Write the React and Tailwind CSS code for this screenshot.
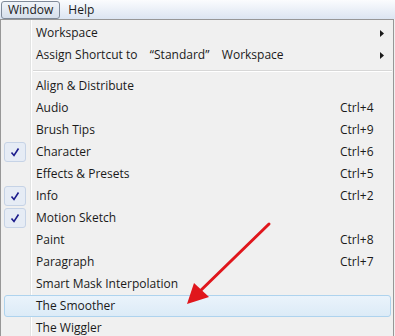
import React from 'react';

const items = [
  { label: 'Align & Distribute' },
  { label: 'Audio', key: 'Ctrl+4' },
  { label: 'Brush Tips', key: 'Ctrl+9' },
  { label: 'Character', key: 'Ctrl+6', checked: true },
  { label: 'Effects & Presets', key: 'Ctrl+5' },
  { label: 'Info', key: 'Ctrl+2', checked: true },
  { label: 'Motion Sketch', checked: true },
  { label: 'Paint', key: 'Ctrl+8' },
  { label: 'Paragraph', key: 'Ctrl+7' },
  { label: 'Smart Mask Interpolation' },
  { label: 'The Smoother', hover: true },
  { label: 'The Wiggler' },
];

function Check() {
  return (
    <div className="absolute left-[3px] top-[1px] w-[22px] h-[20px] rounded-[3px] border border-[#c6d3e6] bg-[#e6ecf5] flex items-center justify-center">
      <svg width="10" height="10" viewBox="0 0 10 10">
        <path d="M1.5 5.5 L4 8.5 L8.5 1.5" fill="none" stroke="#1c1c8c" strokeWidth="1.6" />
      </svg>
    </div>
  );
}

function Row({ label, shortcut, checked, hover, submenu }) {
  return (
    <div className="relative h-[22px] flex items-center">
      {hover && (
        <div className="absolute left-[3px] right-[2px] top-0 bottom-0 rounded-[3px] border border-[#aed3ee] bg-gradient-to-b from-[#eaf3fb] to-[#dcebf7]" />
      )}
      {checked && <Check />}
      <span className="relative pl-[35px] flex-1 whitespace-pre">{label}</span>
      {shortcut && <span className="relative w-[53px]">{shortcut}</span>}
      {submenu && (
        <span className="relative w-[13px]">
          <svg width="4" height="7" viewBox="0 0 4 7"><path d="M0 0 L4 3.5 L0 7 Z" fill="#1a1a1a" /></svg>
        </span>
      )}
    </div>
  );
}

export default function App() {
  return (
    <div className="relative w-[395px] h-[336px] overflow-hidden bg-[#f0f0f0] text-[12px] text-[#1a1a1a]" style={{ fontFamily: '"Open Sans", "Noto Sans", sans-serif' }}>
      {/* menu bar */}
      <div className="h-[19px] flex items-center bg-gradient-to-b from-[#fbfcfe] to-[#dce5f2]">
        <div className="ml-[1px] h-[18px] px-[6px] flex items-center rounded-[3px] border border-[#7f8a99] bg-gradient-to-b from-[#f0f4f9] to-[#d6dfeb]">Window</div>
        <div className="ml-[8px]">Help</div>
      </div>
      {/* dropdown */}
      <div className="relative border-l border-t border-r border-[#979797] mr-[1px] h-[317px]">
        <div className="absolute left-[29px] top-0 bottom-0 w-[2px] border-l border-[#e2e3e3] bg-white" />
        <div className="pt-[2px]">
          <Row label="Workspace" submenu />
          <Row label={'Assign Shortcut to    \u201cStandard\u201d    Workspace'} submenu />
          <div className="h-[9px] flex items-center pl-[32px] pr-[1px]">
            <div className="w-full h-[2px] border-t border-[#d7d7d7] bg-white" />
          </div>
          {items.map((it) => (
            <Row key={it.label} label={it.label} shortcut={it.key} checked={it.checked} hover={it.hover} />
          ))}
        </div>
      </div>
      {/* annotation arrow */}
      <svg className="absolute left-0 top-0" width="395" height="336">
        <line x1="269" y1="224" x2="195" y2="296" stroke="#e0161c" strokeWidth="3" strokeLinecap="round" />
        <path d="M187 304 L194 283 L209 297 Z" fill="#e0161c" />
      </svg>
    </div>
  );
}
